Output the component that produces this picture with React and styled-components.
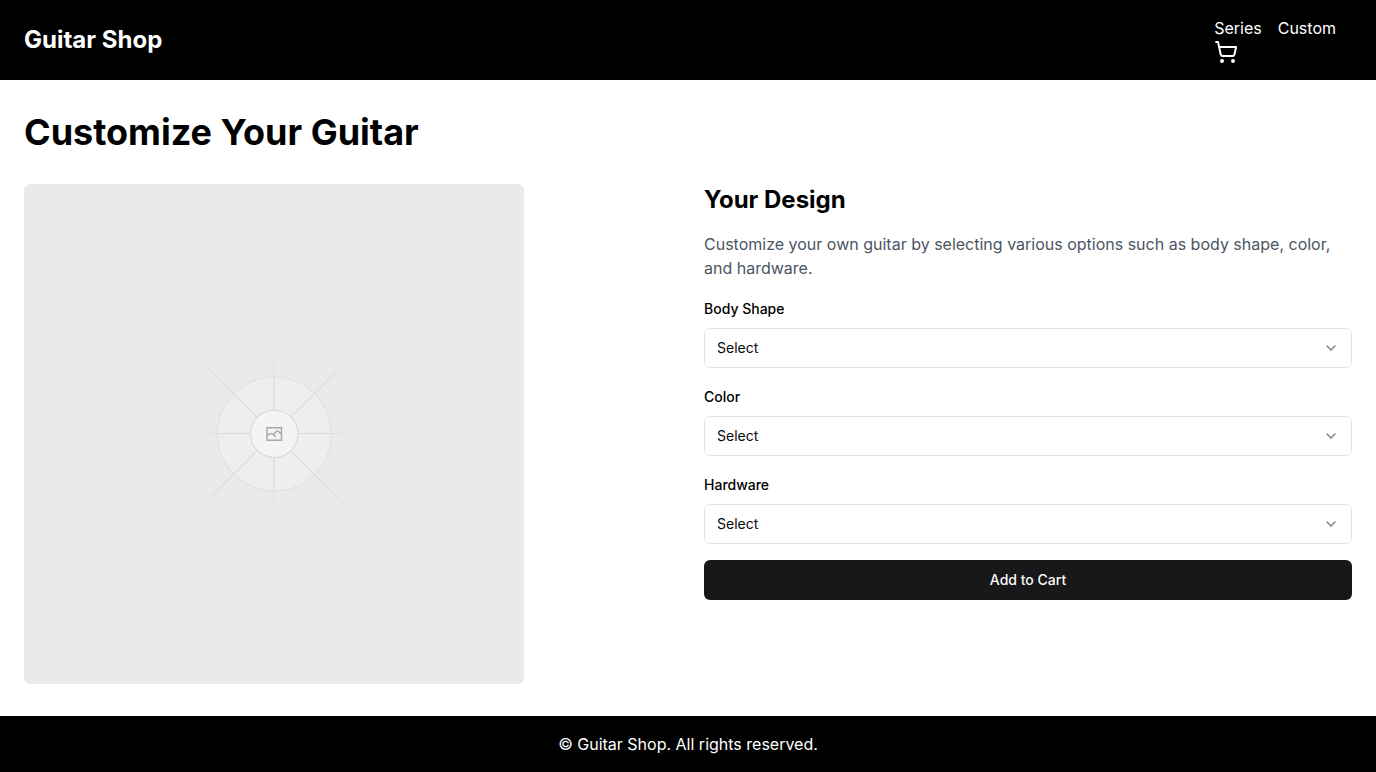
import React, { useId } from "react";
import styled, { createGlobalStyle } from "styled-components";
import { ChevronDown, ShoppingCart } from "lucide-react";

const GlobalStyle = createGlobalStyle`
  *, *::before, *::after { box-sizing: border-box; }
  body {
    margin: 0;
    background: #fff;
    color: #000;
    font-family: Inter, "Liberation Sans", sans-serif;
    font-size: 16px;
    line-height: 24px;
  }
  h1, h2, p { margin: 0; }
`;

const Page = styled.div`
  display: flex;
  flex-direction: column;
  min-height: 100vh;
`;

const Header = styled.header`
  display: flex;
  align-items: center;
  justify-content: space-between;
  padding: 16px 24px;
  background: #000;
  color: #fff;
`;

const Brand = styled.a`
  color: inherit;
  text-decoration: none;
  font-size: 24px;
  line-height: 32px;
  font-weight: 700;
`;

const Nav = styled.nav`
  display: flex;
  flex-direction: column;
  align-items: flex-start;
  padding-right: 16px;
`;

const NavLinks = styled.div`
  display: flex;
  gap: 16px;
`;

const NavLink = styled.a`
  display: block;
  color: inherit;
  text-decoration: none;
`;

const Main = styled.main`
  flex: 1;
  padding: 32px 24px;
`;

const Title = styled.h1`
  margin-bottom: 32px;
  font-size: 36px;
  line-height: 40px;
  font-weight: 700;
`;

const Columns = styled.div`
  display: grid;
  grid-template-columns: repeat(2, minmax(0, 1fr));
  gap: 32px;

  @media (max-width: 767px) {
    grid-template-columns: minmax(0, 1fr);
  }
`;

const Preview = styled.svg`
  display: block;
  width: 100%;
  max-width: 500px;
  height: auto;
  border-radius: 6px;
`;

const Form = styled.form`
  display: flex;
  flex-direction: column;
  gap: 16px;
`;

const Subtitle = styled.h2`
  font-size: 24px;
  line-height: 32px;
  font-weight: 700;
`;

const Description = styled.p`
  color: #4b5563;
`;

const Field = styled.div`
  display: block;
`;

const Label = styled.label`
  font-size: 14px;
  line-height: 16px;
  font-weight: 500;
`;

const SelectBox = styled.div`
  position: relative;
  margin-top: 8px;

  svg {
    position: absolute;
    top: 12px;
    right: 13px;
    opacity: 0.5;
    pointer-events: none;
  }
`;

const Select = styled.select`
  display: block;
  width: 100%;
  height: 40px;
  padding: 8px 36px 8px 12px;
  appearance: none;
  border: 1px solid #e4e4e7;
  border-radius: 6px;
  background: #fff;
  color: #09090b;
  font: inherit;
  font-size: 14px;
  line-height: 20px;
`;

const SubmitButton = styled.button`
  height: 40px;
  padding: 8px 16px;
  border: 0;
  border-radius: 6px;
  background: #18181b;
  color: #fafafa;
  font: inherit;
  font-size: 14px;
  font-weight: 500;
  cursor: pointer;
`;

const Footer = styled.footer`
  padding: 16px 24px;
  background: #000;
  color: #fff;
  text-align: center;
`;

const OPTIONS = [
  { label: "Body Shape", values: [] },
  { label: "Color", values: [] },
  { label: "Hardware", values: [] },
];

const RAYS = [
  { id: "ray-rise", x1: 404, y1: 796, x2: 796, y2: 404 },
  { id: "ray-across", x1: 404, y1: 598.7, x2: 797, y2: 598.7 },
  { id: "ray-down", x1: 599.5, y1: 404, x2: 599.5, y2: 796 },
  { id: "ray-fall", x1: 404, y1: 405, x2: 796, y2: 797 },
];

function GuitarPreview() {
  return (
    <Preview viewBox="0 0 1200 1200" fill="none" role="img" aria-label="Guitar preview">
      <defs>
        {RAYS.map(({ id, ...ends }) => (
          <linearGradient key={id} id={id} gradientUnits="userSpaceOnUse" {...ends}>
            <stop stopColor="#C9C9C9" stopOpacity="0" />
            <stop offset=".208" stopColor="#C9C9C9" />
            <stop offset=".792" stopColor="#C9C9C9" />
            <stop offset="1" stopColor="#C9C9C9" stopOpacity="0" />
          </linearGradient>
        ))}
      </defs>
      <rect width="1200" height="1200" fill="#EAEAEA" />
      <g opacity=".5">
        <g opacity=".5">
          <circle cx="600.7" cy="599.9" r="136.6" fill="#FAFAFA" />
          <circle cx="600.7" cy="599.9" r="136.6" stroke="#C9C9C9" strokeWidth="2.418" />
        </g>
        {RAYS.map(({ id, x1, y1, x2, y2 }) => (
          <path key={id} d={`M${x1} ${y1}L${x2} ${y2}`} stroke={`url(#${id})`} strokeWidth="2.418" />
        ))}
        <circle cx="600.7" cy="599.9" r="56.8" fill="#fff" />
        <path
          stroke="#666"
          strokeWidth="3.4"
          d="M583.2 584.8H618V615H583.2ZM583.2 604.5L588 600.2Q590 598.8 592.5 599.2L598.4 601.2M604 607.5L600 603.2Q598.8 600.8 601 598.6L606 593.6Q608.5 592 611 594L618 601"
        />
        <circle cx="600.7" cy="599.9" r="56.8" stroke="#C9C9C9" strokeWidth="2.418" />
      </g>
    </Preview>
  );
}

function OptionField({ label, values }) {
  const id = useId();
  return (
    <Field>
      <Label htmlFor={id}>{label}</Label>
      <SelectBox>
        <Select id={id} defaultValue="">
          <option value="">Select</option>
          {values.map((value) => (
            <option key={value}>{value}</option>
          ))}
        </Select>
        <ChevronDown size={16} aria-hidden="true" />
      </SelectBox>
    </Field>
  );
}

export default function App() {
  return (
    <Page>
      <GlobalStyle />
      <Header>
        <Brand href="#">Guitar Shop</Brand>
        <Nav>
          <NavLinks>
            <NavLink href="#series">Series</NavLink>
            <NavLink href="#custom">Custom</NavLink>
          </NavLinks>
          <NavLink href="#cart" aria-label="Cart">
            <ShoppingCart size={24} display="block" />
          </NavLink>
        </Nav>
      </Header>
      <Main>
        <Title>Customize Your Guitar</Title>
        <Columns>
          <GuitarPreview />
          <Form onSubmit={(event) => event.preventDefault()}>
            <Subtitle>Your Design</Subtitle>
            <Description>
              Customize your own guitar by selecting various options such as body shape, color, and hardware.
            </Description>
            {OPTIONS.map((option) => (
              <OptionField key={option.label} {...option} />
            ))}
            <SubmitButton type="submit">Add to Cart</SubmitButton>
          </Form>
        </Columns>
      </Main>
      <Footer>© Guitar Shop. All rights reserved.</Footer>
    </Page>
  );
}
